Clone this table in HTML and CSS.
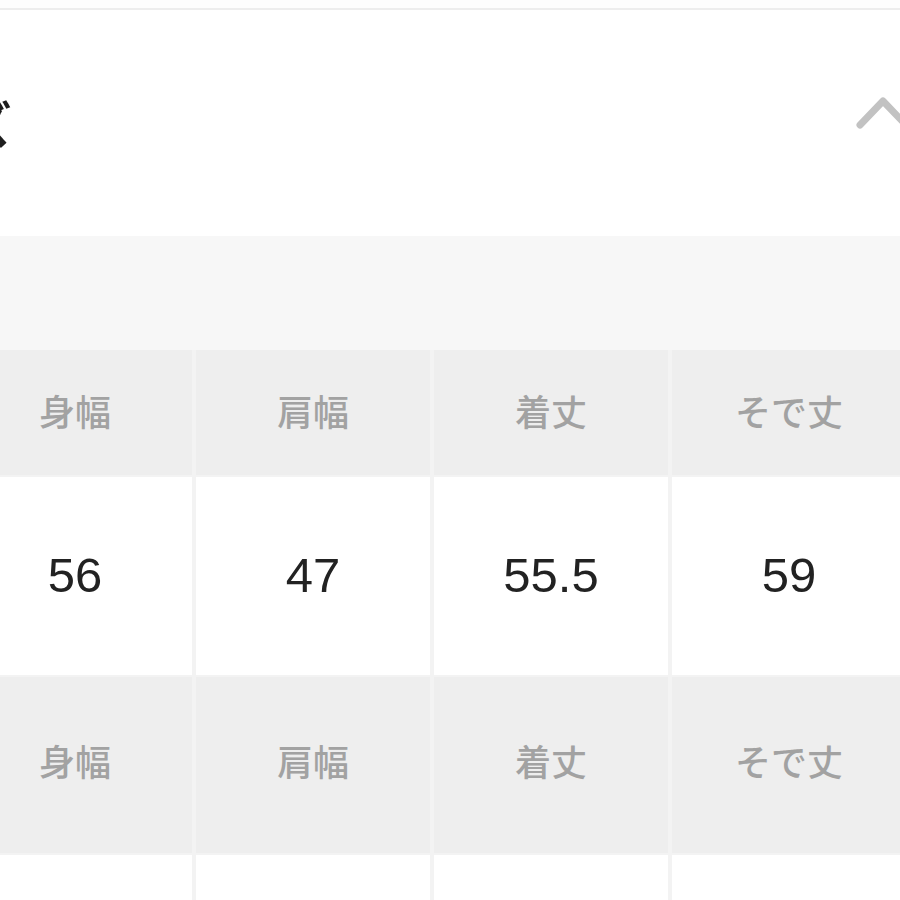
FILE: index.html
```html
<!DOCTYPE html>
<html lang="ja">
<head>
<meta charset="utf-8">
<link rel="stylesheet" href="styles.css">
</head>
<body>
<div class="page">
  <div class="topbar"></div>
  <header class="sec-head">
    <h2 class="sec-title">サイズ</h2>
    <svg class="chevron" width="56" height="40" viewBox="0 0 56 40" aria-hidden="true">
      <polyline points="6,28 29,4 52,28" fill="none" stroke="#c2c2c2" stroke-width="7" stroke-linecap="round" stroke-linejoin="round"/>
    </svg>
  </header>
  <div class="band"></div>
  <div class="size-table">
    <div class="cell head r1">身幅</div>
    <div class="cell head r1">肩幅</div>
    <div class="cell head r1">着丈</div>
    <div class="cell head r1">そで丈</div>
    <div class="cell val r2">56</div>
    <div class="cell val r2">47</div>
    <div class="cell val r2">55.5</div>
    <div class="cell val r2">59</div>
    <div class="cell head r3">身幅</div>
    <div class="cell head r3">肩幅</div>
    <div class="cell head r3">着丈</div>
    <div class="cell head r3">そで丈</div>
    <div class="cell val r4"></div>
    <div class="cell val r4"></div>
    <div class="cell val r4"></div>
    <div class="cell val r4"></div>
  </div>
</div>
</body>
</html>
```
FILE: styles.css
```css
html, body {
  margin: 0;
  padding: 0;
  background: #ffffff;
}
body {
  width: 900px;
  height: 900px;
  overflow: hidden;
  font-family: "Noto Sans CJK JP", "Liberation Sans", sans-serif;
}
.page {
  width: 900px;
}
.topbar {
  height: 8px;
  background: #fdfdfd;
  border-bottom: 2px solid #ededed;
}
.sec-head {
  height: 226px;
  display: flex;
  align-items: center;
  justify-content: space-between;
  background: #ffffff;
}
.sec-title {
  margin: 0 0 0 -137px;
  font-size: 50px;
  font-weight: 700;
  color: #1e1e1e;
  line-height: 1;
  padding-bottom: 2px;
}
.chevron {
  margin-right: -10px;
  margin-bottom: 12px;
}
.band {
  height: 114px;
  background: #f7f7f7;
}
.size-table {
  display: grid;
  grid-template-columns: repeat(4, 234px);
  grid-template-rows: 125px 198px 176px 60px;
  column-gap: 4px;
  row-gap: 2px;
  margin-left: -42px;
  width: 948px;
  background: #f3f3f3;
}
.cell {
  display: flex;
  align-items: center;
  justify-content: center;
}
.head {
  background: #eeeeee;
  color: #a2a2a2;
  font-size: 36px;
  font-weight: 500;
}
.val {
  background: #ffffff;
  color: #222222;
  font-family: "Liberation Sans", Arial, sans-serif;
  font-size: 49px;
}
.r1 { padding-bottom: 6px; }
.r2 { padding-bottom: 3px; }
.r3 { padding-bottom: 10px; }
```
